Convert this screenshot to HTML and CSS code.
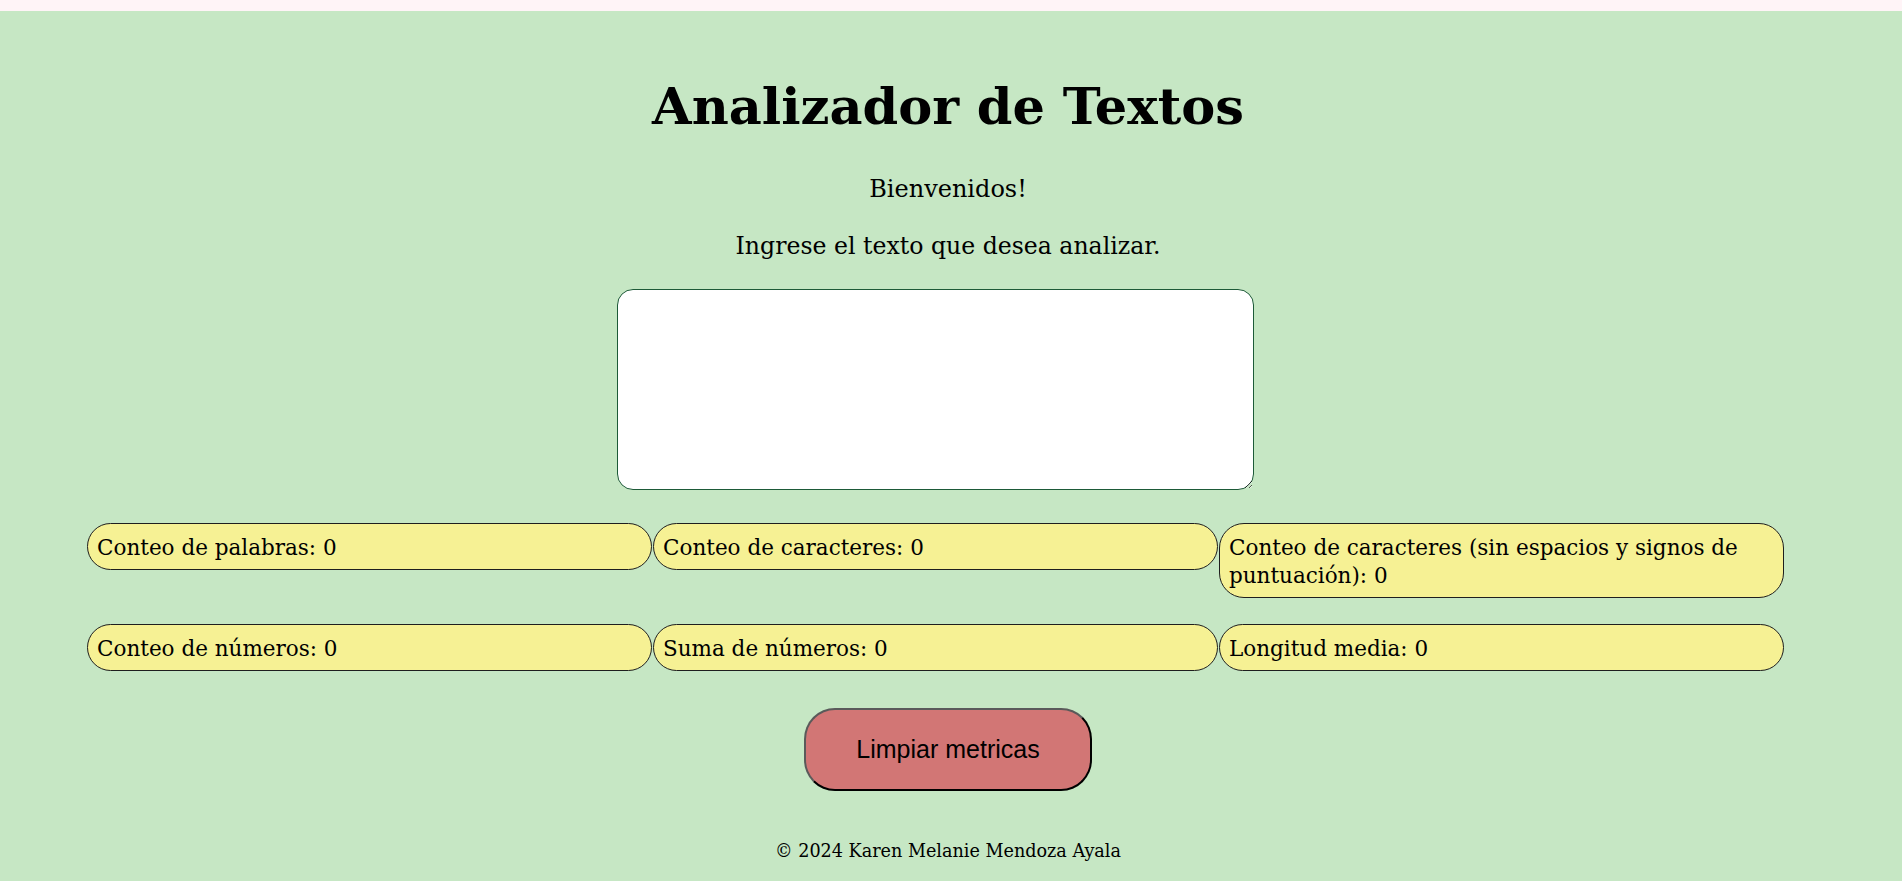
FILE: index.html
```html
<!DOCTYPE html>
<html lang="es">
<head>
<meta charset="utf-8">
<title>Analizador de Textos</title>
<link rel="stylesheet" href="styles.css">
</head>
<body>
  <header class="intro">
    <h1 class="title">Analizador de Textos</h1>
    <p class="lead">Bienvenidos!</p>
    <p class="lead lead-ask">Ingrese el texto que desea analizar.</p>
  </header>
  <main class="panel">
    <textarea class="text-input" name="user-input"></textarea>
    <ul class="metrics">
      <li class="metric">Conteo de palabras: 0</li>
      <li class="metric">Conteo de caracteres: 0</li>
      <li class="metric">Conteo de caracteres (sin espacios y signos de puntuación): 0</li>
      <li class="metric">Conteo de números: 0</li>
      <li class="metric">Suma de números: 0</li>
      <li class="metric">Longitud media: 0</li>
    </ul>
  </main>
  <div class="actions">
    <button class="reset" type="button">Limpiar metricas</button>
  </div>
  <footer class="foot">
    <p class="credit">© 2024 Karen Melanie Mendoza Ayala</p>
  </footer>
</body>
</html>
```

FILE: styles.css
```css
html {
  background: #fff4f7;
}

body {
  margin: 11px 0 0;
  padding-right: 6px;
  min-height: calc(100vh - 11px);
  background: #c6e7c4;
  font-family: "DejaVu Serif", "Liberation Serif", serif;
  color: #000;
  display: flow-root;
}

.intro {
  display: flex;
  flex-direction: column;
  align-items: center;
  padding-top: 66px;
}

.title {
  margin: 0;
  font-size: 51px;
  line-height: 58px;
  font-weight: bold;
}

.lead {
  margin: 39px 0 0;
  font-size: 24px;
  line-height: 30px;
}

.lead-ask {
  margin-top: 27px;
  font-size: 23.6px;
}

.panel {
  margin: 28px 112px 0 87px;
  display: flex;
  flex-direction: column;
  align-items: center;
}

.text-input {
  box-sizing: border-box;
  width: 637px;
  height: 201px;
  margin: 0;
  border: 1px solid #1d5a38;
  border-radius: 16px;
  background: #fff;
  font-family: "DejaVu Serif", serif;
  font-size: 16px;
}

.metrics {
  list-style: none;
  margin: 33px 0 0;
  padding: 0;
  align-self: stretch;
  display: grid;
  grid-template-columns: repeat(3, 1fr);
  column-gap: 1px;
  row-gap: 26px;
  align-items: start;
}

.metric {
  box-sizing: border-box;
  border: 1px solid #1e1e1e;
  border-radius: 25px;
  background: #f6f194;
  padding: 9.5px 10px 7.5px 9px;
  font-size: 21.5px;
  line-height: 28px;
}

.actions {
  display: flex;
  justify-content: center;
  margin-top: 37px;
}

.reset {
  box-sizing: border-box;
  width: 288px;
  height: 83px;
  border: 2px solid;
  border-color: #5a5a5a #000 #000 #5a5a5a;
  border-radius: 31px;
  background: #d27675;
  font-family: "Liberation Sans", Arial, sans-serif;
  font-size: 25px;
  color: #000;
  padding: 0;
}

.foot {
  display: flex;
  justify-content: center;
  padding-bottom: 20px;
}

.credit {
  margin: 49px 0 0;
  font-size: 17.6px;
  line-height: 22px;
}
```
